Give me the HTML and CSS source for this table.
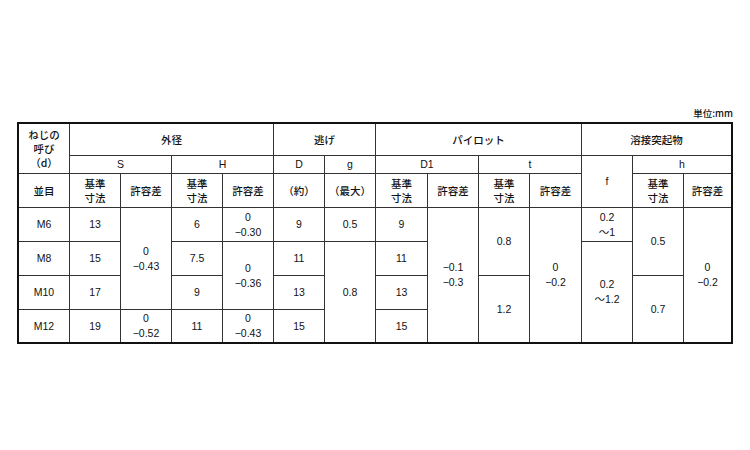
FILE: index.html
```html
<!DOCTYPE html>
<html lang="ja">
<head>
<meta charset="utf-8">
<link rel="stylesheet" href="styles.css">
</head>
<body>
<div class="page">
  <div class="unit">単位:mm</div>
  <div class="grid">
    <div class="cell r2 jp"><span>ねじの<br>呼び<br>（d）</span></div>
    <div class="cell c4 jp">外径</div>
    <div class="cell c2 jp">逃げ</div>
    <div class="cell c4 jp">パイロット</div>
    <div class="cell c3 jp">溶接突起物</div>

    <div class="cell c2">S</div>
    <div class="cell c2">H</div>
    <div class="cell">D</div>
    <div class="cell">g</div>
    <div class="cell c2">D1</div>
    <div class="cell c2">t</div>
    <div class="cell r2">f</div>
    <div class="cell c2">h</div>

    <div class="cell jp">並目</div>
    <div class="cell jp two">基準<br>寸法</div>
    <div class="cell jp">許容差</div>
    <div class="cell jp two">基準<br>寸法</div>
    <div class="cell jp">許容差</div>
    <div class="cell jp">（約）</div>
    <div class="cell jp">（最大）</div>
    <div class="cell jp two">基準<br>寸法</div>
    <div class="cell jp">許容差</div>
    <div class="cell jp two">基準<br>寸法</div>
    <div class="cell jp">許容差</div>
    <div class="cell jp two">基準<br>寸法</div>
    <div class="cell jp">許容差</div>

    <div class="cell">M6</div>
    <div class="cell">13</div>
    <div class="cell r3 two">0<br>−0.43</div>
    <div class="cell">6</div>
    <div class="cell two">0<br>−0.30</div>
    <div class="cell">9</div>
    <div class="cell">0.5</div>
    <div class="cell">9</div>
    <div class="cell r4 two">−0.1<br>−0.3</div>
    <div class="cell r2">0.8</div>
    <div class="cell r4 two">0<br>−0.2</div>
    <div class="cell two">0.2<br>～1</div>
    <div class="cell r2">0.5</div>
    <div class="cell r4 two">0<br>−0.2</div>

    <div class="cell">M8</div>
    <div class="cell">15</div>
    <div class="cell">7.5</div>
    <div class="cell r2 two">0<br>−0.36</div>
    <div class="cell">11</div>
    <div class="cell r3">0.8</div>
    <div class="cell">11</div>
    <div class="cell r3 two">0.2<br>～1.2</div>

    <div class="cell">M10</div>
    <div class="cell">17</div>
    <div class="cell">9</div>
    <div class="cell">13</div>
    <div class="cell">13</div>
    <div class="cell r2">1.2</div>
    <div class="cell r2">0.7</div>

    <div class="cell">M12</div>
    <div class="cell">19</div>
    <div class="cell two">0<br>−0.52</div>
    <div class="cell">11</div>
    <div class="cell two">0<br>−0.43</div>
    <div class="cell">15</div>
    <div class="cell">15</div>
  </div>
</div>
</body>
</html>
```

FILE: styles.css
```css
html, body {
  margin: 0;
  padding: 0;
  background: #fff;
}

body {
  font-family: "Liberation Sans", "Noto Sans CJK JP", sans-serif;
  color: #111;
}

.page {
  width: 716px;
  margin-left: 17px;
  padding-top: 107px;
  display: flex;
  flex-direction: column;
  align-items: flex-end;
}

.unit {
  font-family: "Noto Sans CJK JP", sans-serif;
  font-size: 9.5px;
  font-weight: 500;
  line-height: 12px;
  height: 15px;
}

.grid {
  align-self: stretch;
  display: grid;
  grid-template-columns: 50px 50px 50px 50px 50px 50px 50px 51px 50px 50px 51px 50px 50px 47px;
  grid-template-rows: 31px 17px 33px 33px 33px 33px 32px;
  gap: 1px;
  background: #333;
  border: 2px solid #111;
}

.cell {
  background: #fff;
  display: flex;
  align-items: center;
  justify-content: center;
  text-align: center;
  font-size: 10.5px;
  line-height: 15px;
}

.jp {
  font-family: "Noto Sans CJK JP", sans-serif;
  font-size: 10.5px;
  font-weight: 500;
  line-height: 14px;
}

.two {
  line-height: 15px;
}

.jp.two {
  line-height: 14px;
}

.c2 { grid-column: span 2; }
.c3 { grid-column: span 3; }
.c4 { grid-column: span 4; }
.r2 { grid-row: span 2; }
.r3 { grid-row: span 3; }
.r4 { grid-row: span 4; }
```
